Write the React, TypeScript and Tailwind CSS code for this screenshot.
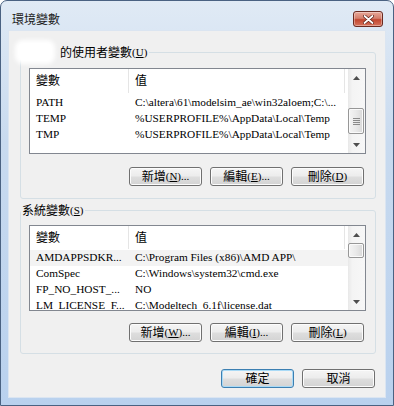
import React from "react";

const F = "font-['Liberation_Serif','Noto_Sans_CJK_TC',serif]";

function Btn({ children, def = false }: { children: React.ReactNode; def?: boolean }) {
  return (
    <div
      className={`flex h-[19px] w-[73px] items-center justify-center rounded-[3px] border text-[12px] leading-none text-black bg-[linear-gradient(#f5f5f5,#ececec_48%,#dedede_52%,#d3d3d3)] ${
        def ? "border-[#3c7fb1] shadow-[inset_0_0_0_1px_#a9daf6]" : "border-[#707070] shadow-[inset_0_0_0_1px_#fcfcfc]"
      }`}
    >
      {children}
    </div>
  );
}

function Lat({ children }: { children: React.ReactNode }) {
  return <span className="text-[11px]">{children}</span>;
}

function Arrow({ up }: { up: boolean }) {
  return (
    <div className="flex h-[17px] items-center justify-center">
      <svg width="7" height="4" viewBox="0 0 7 4">
        <path d={up ? "M0 4 L3.5 0 L7 4 Z" : "M0 0 L3.5 4 L7 0 Z"} fill="#4f4f4f" />
      </svg>
    </div>
  );
}

function ScrollBar({ thumbClass, grip }: { thumbClass: string; grip: boolean }) {
  return (
    <div className="flex w-[17px] shrink-0 flex-col bg-[linear-gradient(90deg,#e8e8e8,#f4f4f4_25%,#f7f7f7)]">
      <Arrow up />
      <div className="flex flex-1 flex-col">
        <div
          className={`mr-[1px] flex items-center justify-center rounded-[2px] border border-[#979797] bg-[linear-gradient(90deg,#f4f4f4,#e9e9e9_50%,#d8d8d8)] shadow-[inset_0_0_0_1px_#fafafa] ${thumbClass}`}
        >
          {grip && (
            <div className="flex flex-col gap-[1px]">
              <div className="h-[1px] w-[7px] bg-[#8a8a8a]" />
              <div className="h-[1px] w-[7px] bg-[#8a8a8a]" />
              <div className="h-[1px] w-[7px] bg-[#8a8a8a]" />
              <div className="h-[1px] w-[7px] bg-[#8a8a8a]" />
            </div>
          )}
        </div>
      </div>
      <Arrow up={false} />
    </div>
  );
}

type Row = { k: string; v: string; sel?: boolean };

function ListView({
  rows,
  headerClass,
  thumbClass,
  grip,
}: {
  rows: Row[];
  headerClass: string;
  thumbClass: string;
  grip: boolean;
}) {
  return (
    <div className="flex h-[86px] overflow-hidden border border-[#828790] bg-white">
      <div className="flex min-w-0 flex-1 flex-col">
        <div className={`flex shrink-0 text-[12px] leading-none ${headerClass}`}>
          <div className="flex h-full w-[99px] items-center border-r border-[#e5e5e5] pl-[6px]">變數</div>
          <div className="flex h-full w-[216px] items-center border-r border-[#e5e5e5] pl-[6px]">值</div>
        </div>
        {rows.map((r) => (
          <div
            key={r.k}
            className={`flex h-[16px] shrink-0 items-center whitespace-nowrap text-[11.3px] leading-none ${
              r.sel ? "bg-[#f3f3f3]" : ""
            }`}
          >
            <div className="w-[99px] shrink-0 overflow-hidden pl-[6px]">{r.k}</div>
            <div className="shrink-0 pl-[6px]">{r.v}</div>
          </div>
        ))}
      </div>
      <ScrollBar thumbClass={thumbClass} grip={grip} />
    </div>
  );
}

export default function App() {
  const userRows: Row[] = [
    { k: "PATH", v: "C:\\altera\\61\\modelsim_ae\\win32aloem;C:\\..." },
    { k: "TEMP", v: "%USERPROFILE%\\AppData\\Local\\Temp" },
    { k: "TMP", v: "%USERPROFILE%\\AppData\\Local\\Temp" },
  ];
  const sysRows: Row[] = [
    { k: "AMDAPPSDKR...", v: "C:\\Program Files (x86)\\AMD APP\\", sel: true },
    { k: "ComSpec", v: "C:\\Windows\\system32\\cmd.exe" },
    { k: "FP_NO_HOST_...", v: "NO" },
    { k: "LM_LICENSE_F...", v: "C:\\Modeltech_6.1f\\license.dat" },
  ];

  return (
    <div
      className={`flex h-[406px] w-[394px] flex-col rounded-t-[7px] border border-[#4a6282] bg-[linear-gradient(#e0eaf5,#c8daef_35%,#b9d1ee)] px-[7px] pb-[7px] text-black ${F}`}
    >
      {/* Title bar */}
      <div className="flex h-[29px] shrink-0 items-start">
        <div className="mt-[10px] pl-[4px] font-['Noto_Sans_CJK_TC',sans-serif] text-[12px] leading-[16px] text-[#1a1a1a]">
          環境變數
        </div>
        <div className="ml-auto mr-[3px] mt-[10px] flex h-[16px] w-[30px] items-center justify-center rounded-[3px] border border-[#6a2a20] bg-[linear-gradient(#e8a899,#d47f6c_45%,#c2462f_55%,#d6735c)] shadow-[inset_0_0_0_1px_rgba(255,255,255,0.35)]">
          <svg width="11" height="9" viewBox="0 0 11 9">
            <path d="M1.5 1 L9.5 8 M9.5 1 L1.5 8" stroke="#5a1d14" strokeWidth="3.2" strokeLinecap="round" />
            <path d="M1.5 1 L9.5 8 M9.5 1 L1.5 8" stroke="#ffffff" strokeWidth="1.8" strokeLinecap="round" />
          </svg>
        </div>
      </div>

      {/* Client area */}
      <div className="flex flex-1 flex-col border border-[#dbe5f1] bg-[#f0f0f0] pl-[11px] pr-[9px] pt-[13px]">
        <fieldset className="rounded-[3px] border border-[#d5dfe5] pb-[12px] pl-[8px] pr-[9px] pt-[8px]">
          <legend className="ml-[-14px] flex h-[16px] items-center pr-[2px] text-[12px] leading-[16px]">
            <span className="-my-[4px] mr-[5px] inline-block h-[24px] w-[40px] rounded-[8px] bg-white blur-[2px]" />
            <span className="font-['Noto_Sans_CJK_TC',sans-serif]">的使用者變數</span>
            <Lat>
              (<u>U</u>)
            </Lat>
          </legend>
          <ListView
            rows={userRows}
            headerClass="h-[26px] pb-[2px]"
            thumbClass="mt-[22px] h-[26px]"
            grip
          />
          <div className="mr-[2px] mt-[13px] flex justify-end gap-[8px]">
            <Btn>
              新增<Lat>(<u>N</u>)...</Lat>
            </Btn>
            <Btn>
              編輯<Lat>(<u>E</u>)...</Lat>
            </Btn>
            <Btn>
              刪除<Lat>(<u>D</u>)</Lat>
            </Btn>
          </div>
        </fieldset>

        <fieldset className="mt-[3px] rounded-[3px] border border-[#d5dfe5] pb-[11px] pl-[8px] pr-[9px] pt-[7px]">
          <legend className="ml-[-8px] flex h-[16px] items-center pl-[1px] pr-[2px] text-[12px] leading-[16px]">
            <span className="font-['Noto_Sans_CJK_TC',sans-serif]">系統變數</span>
            <Lat>
              (<u>S</u>)
            </Lat>
          </legend>
          <ListView rows={sysRows} headerClass="h-[24px] pb-[1px]" thumbClass="h-[15px]" grip={false} />
          <div className="mr-[2px] mt-[12px] flex justify-end gap-[8px]">
            <Btn>
              新增<Lat>(<u>W</u>)...</Lat>
            </Btn>
            <Btn>
              編輯<Lat>(<u>I</u>)...</Lat>
            </Btn>
            <Btn>
              刪除<Lat>(<u>L</u>)</Lat>
            </Btn>
          </div>
        </fieldset>

        <div className="mr-[1px] mt-[15px] flex justify-end gap-[8px]">
          <Btn def>確定</Btn>
          <Btn>取消</Btn>
        </div>
      </div>
    </div>
  );
}
